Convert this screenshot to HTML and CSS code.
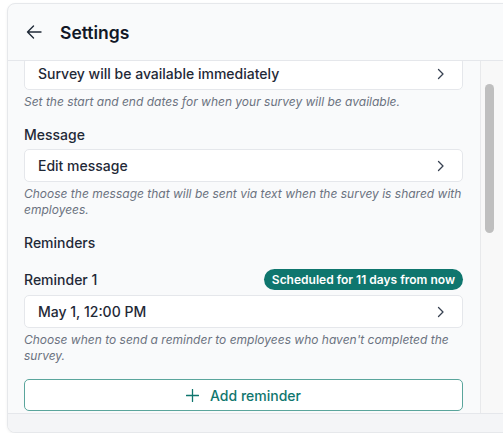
FILE: index.html
```html
<!DOCTYPE html>
<html>
<head>
<meta charset="utf-8">
<link rel="stylesheet" href="styles.css">
</head>
<body>
<div class="panel">
  <header class="header">
    <svg class="back" width="16" height="14" viewBox="0 0 16 14"><path d="M15 7H1.5M7.5 1L1.5 7l6 6" fill="none" stroke="#1f2937" stroke-width="1.4" stroke-linecap="round" stroke-linejoin="round"/></svg>
    <h1 class="title">Settings</h1>
  </header>
  <div class="main">
    <div class="scroll">
      <div class="content">
        <div class="group first">
          <div class="card"><span>Survey will be available immediately</span><svg class="chev" width="8" height="12" viewBox="0 0 8 12"><path d="M1.5 1.5L6 6l-4.5 4.5" fill="none" stroke="#374151" stroke-width="1.3" stroke-linecap="round" stroke-linejoin="round"/></svg></div>
          <p class="help">Set the start and end dates for when your survey will be available.</p>
        </div>
        <div class="group">
          <div class="label">Message</div>
          <div class="card"><span>Edit message</span><svg class="chev" width="8" height="12" viewBox="0 0 8 12"><path d="M1.5 1.5L6 6l-4.5 4.5" fill="none" stroke="#374151" stroke-width="1.3" stroke-linecap="round" stroke-linejoin="round"/></svg></div>
          <p class="help">Choose the message that will be sent via text when the survey is shared with employees.</p>
        </div>
        <div class="group solo">
          <div class="label">Reminders</div>
        </div>
        <div class="group">
          <div class="row">
            <div class="label">Reminder 1</div>
            <span class="badge">Scheduled for 11 days from now</span>
          </div>
          <div class="card"><span>May 1, 12:00 PM</span><svg class="chev" width="8" height="12" viewBox="0 0 8 12"><path d="M1.5 1.5L6 6l-4.5 4.5" fill="none" stroke="#374151" stroke-width="1.3" stroke-linecap="round" stroke-linejoin="round"/></svg></div>
          <p class="help">Choose when to send a reminder to employees who haven't completed the survey.</p>
        </div>
        <div class="group">
          <button class="add"><svg width="13" height="13" viewBox="0 0 13 13"><path d="M6.5 0.5v12M0.5 6.5h12" fill="none" stroke="#0f766e" stroke-width="1.3" stroke-linecap="round"/></svg><span>Add reminder</span></button>
        </div>
      </div>
    </div>
    <div class="track"><div class="thumb"></div></div>
  </div>
  <footer class="footer"></footer>
</div>
</body>
</html>
```
FILE: styles.css
```css
* { box-sizing: border-box; }
html, body { margin: 0; padding: 0; background: #ffffff; overflow: hidden; }
body { font-family: Inter, "Noto Sans", sans-serif; color: #1f2937; }
.panel {
  margin: 3px 0 0 7px;
  width: 520px;
  height: 430px;
  border: 1px solid #e6e8eb;
  border-radius: 8px;
  background: #f9fafb;
  display: flex;
  flex-direction: column;
  overflow: hidden;
  box-shadow: 0 1px 3px rgba(0,0,0,0.06);
}
.header {
  height: 57px;
  flex: none;
  border-bottom: 1px solid #e5e7eb;
  display: flex;
  align-items: center;
  padding-left: 18px;
  gap: 18px;
}
.back { display: block; }
.title { margin: 0; font-size: 17.5px; font-weight: 600; color: #111827; }
.main { height: 352px; flex: none; display: flex; }
.scroll { width: 472px; flex: none; overflow: hidden; }
.content { padding: 0 17px 0 16px; display: flex; flex-direction: column; gap: 15px; }
.group { display: flex; flex-direction: column; }
.group.first { margin-top: -4px; }
.card {
  height: 33px;
  background: #ffffff;
  border: 1px solid #e5e7eb;
  border-radius: 5px;
  display: flex;
  align-items: center;
  justify-content: space-between;
  padding: 0 17px 0 13px;
  font-size: 14px;
  font-weight: 500;
  color: #1f2937;
}
.chev { display: block; }
.help {
  margin: 4px 0 0;
  font-size: 12px;
  line-height: 16px;
  font-style: italic;
  color: #6b7280;
}
.label { font-size: 14px; font-weight: 500; line-height: 20px; color: #1f2937; margin-bottom: 4px; }
.solo .label { margin-bottom: 1px; }
.row { display: flex; align-items: center; justify-content: space-between; margin-bottom: 5px; }
.row .label { margin-bottom: 0; }
.badge {
  height: 21px;
  padding: 0 8px;
  border-radius: 11px;
  background: #0f766e;
  color: #ffffff;
  font-size: 12px;
  font-weight: 600;
  display: flex;
  align-items: center;
}
.add {
  height: 32px;
  width: 100%;
  background: #ffffff;
  border: 1px solid #5aa59c;
  border-radius: 5px;
  display: flex;
  align-items: center;
  justify-content: center;
  gap: 11px;
  font-family: inherit;
  font-size: 14px;
  font-weight: 500;
  color: #0f766e;
  padding: 0;
}
.add svg { display: block; }
.track {
  flex: 1;
  border-left: 1px solid #e8e9eb;
  background: #f8f8f8;
  padding: 23px 0 0 4px;
}
.thumb { width: 9px; height: 149px; background: #bfbfbf; border-radius: 5px; }
.footer {
  flex: 1;
  border-top: 1px solid #e5e7eb;
  background: #f4f5f7;
}
```
